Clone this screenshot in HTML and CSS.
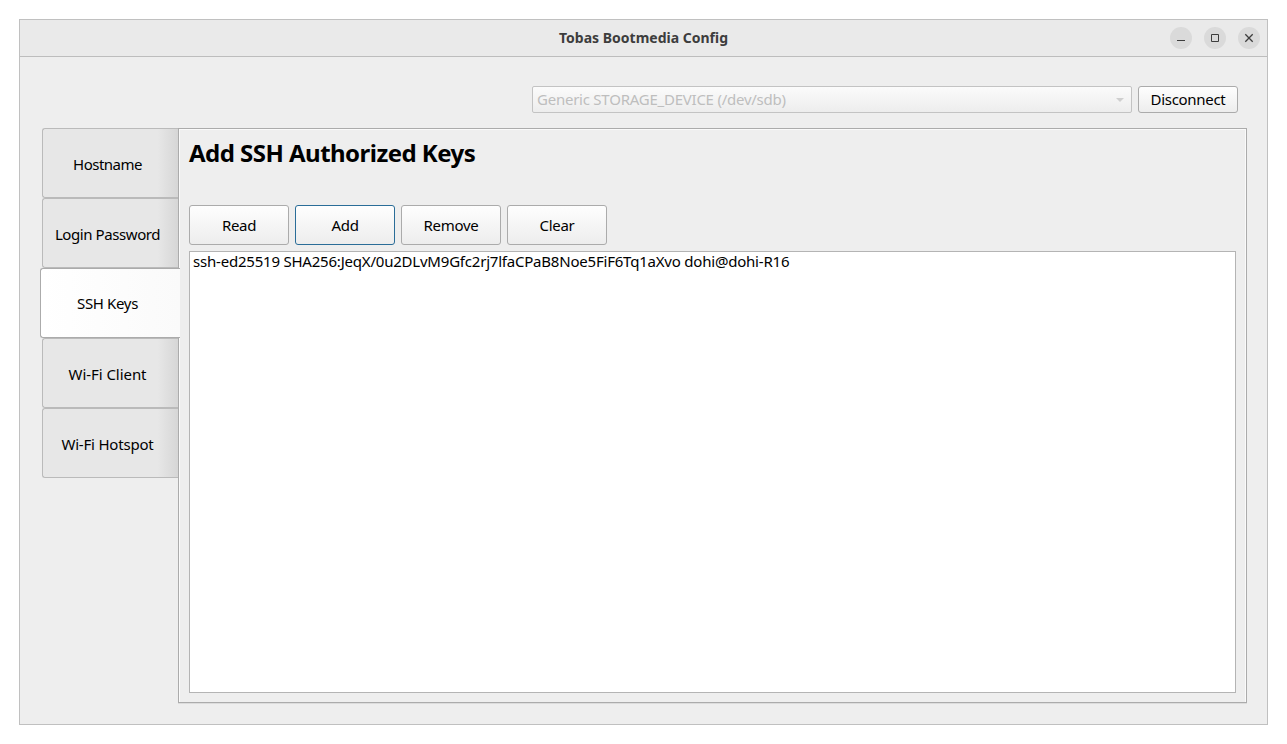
FILE: index.html
```html
<!DOCTYPE html>
<html lang="en">
<head>
<meta charset="utf-8">
<title>Tobas Bootmedia Config</title>
<link rel="stylesheet" href="styles.css">
</head>
<body>
<div class="window">
  <header class="titlebar">
    <h1 class="title">Tobas Bootmedia Config</h1>
    <div class="controls">
      <button class="control" aria-label="Minimize"><svg width="22" height="22"><path d="M7 13.5h8" stroke="#3d3d3d" fill="none"/></svg></button>
      <button class="control" aria-label="Maximize"><svg width="22" height="22"><path d="M7.5 7.5h7v7h-7z" stroke="#3d3d3d" fill="none"/></svg></button>
      <button class="control" aria-label="Close"><svg width="22" height="22"><path d="M7.3 7.3l7.4 7.4M14.7 7.3l-7.4 7.4" stroke="#3d3d3d" stroke-width="1.3" fill="none"/></svg></button>
    </div>
  </header>
  <div class="device-row">
    <div class="combo"><span class="t-combo">Generic STORAGE_DEVICE (/dev/sdb)</span><svg width="8" height="4"><path d="M0 0h8L4 4z" fill="#cfcfcf"/></svg></div>
    <button class="button"><span class="t-disconnect">Disconnect</span></button>
  </div>
  <main class="main">
    <nav class="tabs">
      <div class="tab"><span class="t-hostname">Hostname</span></div>
      <div class="tab"><span class="t-login">Login Password</span></div>
      <div class="tab selected"><span class="t-ssh">SSH Keys</span></div>
      <div class="tab"><span class="t-client">Wi-Fi Client</span></div>
      <div class="tab"><span class="t-hotspot">Wi-Fi Hotspot</span></div>
    </nav>
    <section class="panel">
      <h2 class="heading">Add SSH Authorized Keys</h2>
      <div class="actions">
        <button class="button"><span class="t-action">Read</span></button>
        <button class="button focused"><span class="t-action">Add</span></button>
        <button class="button"><span class="t-action">Remove</span></button>
        <button class="button"><span class="t-action">Clear</span></button>
      </div>
      <div class="list"><span class="t-key">ssh-ed25519 SHA256:JeqX/0u2DLvM9Gfc2rj7lfaCPaB8Noe5FiF6Tq1aXvo dohi@dohi-R16</span></div>
    </section>
  </main>
</div>
</body>
</html>
```
FILE: styles.css
```css
* { box-sizing: border-box; }
body {
  margin: 0;
  padding: 19px;
  background: #fff;
  font: 15px/20px "Noto Sans", sans-serif;
  color: #000;
  white-space: nowrap;
}
h1, h2 { margin: 0; }
button { font: inherit; color: inherit; padding: 0; }
svg { display: block; flex: none; }
.window {
  width: 1249px;
  height: 706px;
  border: 1px solid #c0c0c0;
  background: #eee;
}
.titlebar {
  display: grid;
  grid-template-columns: 109px 1fr 109px;
  align-items: center;
  height: 37px;
  padding-bottom: 1px;
  border-bottom: 1px solid #bdbdbd;
  background: #eaeaea;
}
.title {
  grid-column: 2;
  text-align: center;
  font-size: 14px;
  line-height: 20px;
  color: #3d3d3d;
}
.controls { display: flex; gap: 12px; justify-content: flex-end; padding-right: 7px; }
.control { width: 22px; height: 22px; border: 0; border-radius: 50%; background: #dadada; }
.device-row {
  display: flex;
  justify-content: flex-end;
  gap: 6px;
  padding: 29px 29px 0 0;
}
.combo {
  display: flex;
  align-items: center;
  justify-content: space-between;
  width: 600px;
  height: 27px;
  padding: 0 7px 0 4px;
  border: 1px solid #c3c3c3;
  border-radius: 2px;
  background: linear-gradient(#fbfbfb, #ededed);
  color: #bebebe;
}
.t-combo { padding-bottom: 2px; letter-spacing: -0.24px; }
.button {
  width: 100px;
  height: 27px;
  border: 1px solid #ababab;
  border-radius: 3px;
  background: linear-gradient(#fefefe, #ededed);
}
.device-row .button { padding-bottom: 2px; }
.t-disconnect { letter-spacing: -0.3px; }
.button.focused { border-color: #2a6d98; }
.main { display: flex; margin: 15px 20px 0 22px; height: 575px; }
.tabs { width: 136px; flex: none; }
.tab {
  display: flex;
  align-items: center;
  justify-content: center;
  height: 70px;
  padding: 2px 6px 0 0;
  border: 1px solid #bababa;
  border-right: 0;
  border-radius: 3px 0 0 3px;
  background: linear-gradient(90deg, #e7e7e7 85%, #d6d6d6);
}
.tab.selected {
  position: relative;
  width: 140px;
  margin-left: -2px;
  padding-top: 0;
  border-color: #ababab;
  background: linear-gradient(90deg, #fff, #fafafa);
}
.t-hostname { letter-spacing: -0.5px; }
.t-login { letter-spacing: -0.42px; }
.t-ssh { letter-spacing: -0.35px; }
.t-client { letter-spacing: -0.05px; }
.t-hotspot { letter-spacing: -0.2px; }
.panel {
  display: flex;
  flex-direction: column;
  flex: 1;
  padding: 9px 10px 9px;
  border: 1px solid #ababab;
  box-shadow: inset 1px 1px #fafafa, inset -1px 0 #fafafa, 0 1px #dcdcdc;
}
.heading { height: 67px; font-size: 24px; line-height: 30px; letter-spacing: -0.53px; }
.actions { display: flex; gap: 6px; margin-bottom: 6px; }
.actions .button { height: 40px; }
.t-action { letter-spacing: -0.3px; }
.list { flex: 1; padding: 0 3px; border: 1px solid #b4b4b4; background: #fff; line-height: 18px; }
.t-key { letter-spacing: -0.21px; }
```
